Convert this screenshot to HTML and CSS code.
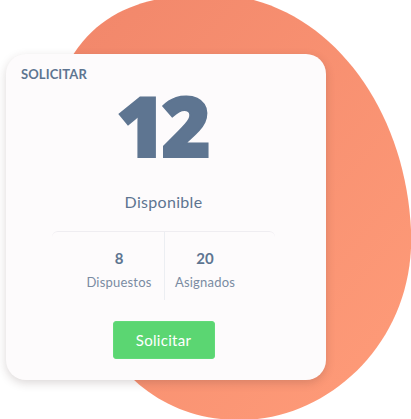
FILE: index.html
```html
<!DOCTYPE html>
<html lang="es">
<head>
<meta charset="utf-8">
<title>Solicitar</title>
<link rel="stylesheet" href="styles.css">
</head>
<body>
<div class="stage">
  <svg class="blob" width="411" height="419" viewBox="0 0 411 419" aria-hidden="true">
    <defs>
      <linearGradient id="bg" x1="0" y1="0" x2="1" y2="1">
        <stop offset="0" stop-color="#f1866a"/>
        <stop offset="1" stop-color="#ff9c79"/>
      </linearGradient>
    </defs>
    <path d="M205 -6 C320 -8 405 100 411 230 C416 340 330 420 240 420 C160 420 110 370 80 300 C50 230 40 130 70 60 C100 8 150 -4 205 -6 Z" fill="url(#bg)"/>
  </svg>
  <div class="card">
    <div class="title">SOLICITAR</div>
    <div class="big">12</div>
    <div class="label">Disponible</div>
    <div class="stats">
      <div class="stat stat-left">
        <div class="num">8</div>
        <div class="cap">Dispuestos</div>
      </div>
      <div class="stat stat-right">
        <div class="num">20</div>
        <div class="cap">Asignados</div>
      </div>
    </div>
    <button class="btn">Solicitar</button>
  </div>
</div>
</body>
</html>
```

FILE: styles.css
```css
html, body {
  margin: 0;
  padding: 0;
  background: #ffffff;
}
body {
  font-family: "Lato", "Open Sans", sans-serif;
  overflow: hidden;
}
.stage {
  position: relative;
  width: 411px;
  height: 419px;
  box-sizing: border-box;
  padding: 54px 0 0 6px;
}
.blob {
  position: absolute;
  left: 0;
  top: 0;
}
.card {
  position: relative;
  z-index: 1;
  width: 320px;
  height: 326px;
  box-sizing: border-box;
  padding: 12px 20px 0 15px;
  background: #fdfbfc;
  border-radius: 20px;
  box-shadow: 0 3px 10px rgba(60, 40, 40, 0.18);
  display: flex;
  flex-direction: column;
  align-items: center;
  color: #5e7591;
}
.title {
  align-self: flex-start;
  font-size: 13px;
  line-height: 16px;
  font-weight: 700;
  letter-spacing: 0.1px;
}
.big {
  font-family: "Open Sans", "Lato", sans-serif;
  font-size: 84px;
  line-height: 86px;
  font-weight: 800;
  letter-spacing: -4px;
  -webkit-text-stroke: 2px #5e7591;
  padding-right: 4px;
}
.label {
  margin-top: 24px;
  font-size: 16px;
  line-height: 20px;
  letter-spacing: 0.3px;
}
.stats {
  margin-top: 19px;
  width: 223px;
  border-top: 1px solid #efedf1;
  border-radius: 6px 6px 0 0;
  display: flex;
  padding-left: 22px;
  box-sizing: border-box;
}
.stat {
  padding: 16px 0 9px;
  text-align: center;
}
.stat-left {
  width: 90px;
}
.stat-right {
  width: 80px;
  border-left: 1px solid #eceef2;
}
.num {
  font-size: 15px;
  line-height: 20px;
  font-weight: 700;
}
.cap {
  margin-top: 5px;
  font-size: 13px;
  line-height: 18px;
  color: #7a8ba2;
  letter-spacing: 0.2px;
}
.btn {
  margin-top: 21px;
  width: 102px;
  height: 38px;
  border: 1px solid #62da79;
  border-radius: 3px;
  background: #5bd672;
  color: #ffffff;
  font-family: "Lato", "Open Sans", sans-serif;
  font-size: 15px;
  letter-spacing: 0.3px;
  padding: 0;
}
```
